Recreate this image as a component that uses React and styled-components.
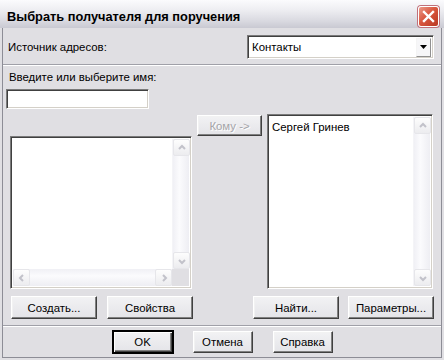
import React from 'react';
import styled, { createGlobalStyle, css } from 'styled-components';

const Global = createGlobalStyle`
  html, body { margin: 0; padding: 0; background: #e0dfe3; }
  body {
    font-family: "Liberation Sans", Arial, sans-serif;
    font-size: 11.4px;
    color: #000;
  }
`;

// window frame
const Window = styled.div`
  width: 444px;
  height: 360px;
  box-sizing: border-box;
  display: flex;
  flex-direction: column;
  background: #e0dfe3;
`;

const TitleBar = styled.div`
  flex: none;
  height: 28px;
  box-sizing: border-box;
  display: flex;
  align-items: center;
  justify-content: space-between;
  padding: 4px 5px 0 7px;
  background: linear-gradient(#fbfbfd 0%, #eeeef2 35%, #d9d9e0 75%, #c9c9d2 100%);
`;

const Title = styled.div`
  font-weight: 700;
  font-size: 12.8px;
`;

const CloseButton = styled.div`
  width: 21px;
  height: 21px;
  box-sizing: border-box;
  border: 1px solid #fff;
  border-radius: 3px;
  display: flex;
  align-items: center;
  justify-content: center;
  background: linear-gradient(135deg, #eb9b8c 0%, #d9573f 45%, #b93822 100%);
  box-shadow: 0 0 0 1px #c0707a;
`;

const Frame = styled.div`
  flex: 1;
  display: flex;
  flex-direction: column;
  margin: 0 2px 2px;
  border: 1px solid #8d8d96;
  border-top: none;
`;

// rows
const TopRow = styled.div`
  display: flex;
  align-items: center;
  justify-content: space-between;
  margin: 7px 7px 0 5px;
`;

const Separator = styled.div`
  height: 0;
  border-top: 1px solid #a0a0a8;
  border-bottom: 1px solid #fff;
  margin-top: ${(p) => p.$top}px;
`;

const FieldLabel = styled.div`
  line-height: 14px;
  margin: ${(p) => p.$margin};
`;

const sunken = css`
  box-sizing: border-box;
  background: #fff;
  border: 1px solid;
  border-color: #7a7a7a #fff #fff #7a7a7a;
  box-shadow: inset 1px 1px #404040, inset -1px -1px #d4d0c8;
`;

const Combo = styled.div`
  ${sunken}
  width: 187px;
  height: 24px;
  display: flex;
  align-items: center;
  justify-content: space-between;
  padding: 0 2px 0 4px;
`;

const ComboArrow = styled.div`
  width: 15px;
  height: 19px;
  box-sizing: border-box;
  border: 1px solid;
  border-color: #f4f4f4 #909090 #909090 #f4f4f4;
  background: #f6f6f8;
  display: flex;
  align-items: center;
  justify-content: center;
`;

const TextInput = styled.div`
  ${sunken}
  width: 143px;
  height: 20px;
  margin: 5px 0 0 3px;
`;

const Main = styled.div`
  display: grid;
  grid-template-columns: 182px 65px 166px;
  column-gap: 5px;
  align-items: start;
  margin: 5px 0 0 7px;
`;

const ListBox = styled.div`
  ${sunken}
  height: ${(p) => p.$height}px;
  margin-top: ${(p) => p.$top}px;
  display: grid;
  grid-template-columns: 1fr 17px;
  grid-template-rows: ${(p) => (p.$hscroll ? '1fr 17px' : '1fr')};
  padding: 2px;
`;

const ListContent = styled.div`
  padding: 3px 2px;
  line-height: 14px;
`;

const VScroll = styled.div`
  display: flex;
  flex-direction: column;
  background: linear-gradient(90deg, #f0f0f5, #fbfbfd 40%, #eeeef3);
  border-left: 1px solid #f4f4f7;
`;

const HScroll = styled.div`
  display: flex;
  background: linear-gradient(#f0f0f5, #fbfbfd 40%, #eeeef3);
`;

const Track = styled.div`
  flex: 1;
`;

const Corner = styled.div`
  background: #e0dfe3;
`;

const ScrollButton = styled.div`
  width: 17px;
  height: 17px;
  flex: none;
  box-sizing: border-box;
  border: 1px solid #e6e6ea;
  border-radius: 2px;
  background: linear-gradient(#fdfdfd, #ececef);
  display: flex;
  align-items: center;
  justify-content: center;
`;

const Button = styled.div`
  box-sizing: border-box;
  width: ${(p) => p.$width}px;
  height: ${(p) => p.$height}px;
  margin-top: ${(p) => p.$top || 0}px;
  display: flex;
  align-items: center;
  justify-content: center;
  border: 1px solid;
  border-color: #fff #404040 #404040 #fff;
  box-shadow: inset -1px -1px #808080, inset 1px 1px #f2f2f2;
  background: linear-gradient(#f2f2f4, #e4e4e8);
  color: ${(p) => (p.$disabled ? '#a4a4a8' : '#000')};
  text-shadow: ${(p) => (p.$disabled ? '1px 1px #fff' : 'none')};
  ${(p) => p.$default && css`
    outline: 1px solid #000;
    border-color: #000;
    box-shadow: inset 1px 1px #fff, inset -1px -1px #404040, inset -2px -2px #808080;
  `}
`;

const ButtonRow = styled.div`
  display: flex;
  justify-content: space-between;
  margin: 7px 7px 0 8px;
`;

const ButtonGroup = styled.div`
  display: flex;
  gap: ${(p) => p.$gap}px;
`;

const Footer = styled.div`
  display: flex;
  justify-content: center;
  gap: 20px;
  margin-top: 4px;
  padding-left: 1px;
`;

const Chevron = ({ dir, color = '#c2c2ca' }) => {
  const paths = {
    up: 'M3 7 L6 4 L9 7',
    down: 'M3 5 L6 8 L9 5',
    left: 'M7 3 L4 6 L7 9',
    right: 'M5 3 L8 6 L5 9',
  };
  return (
    <svg width="12" height="12" viewBox="0 0 12 12">
      <path d={paths[dir]} fill="none" stroke={color} strokeWidth="2" />
    </svg>
  );
};

const App = () => (
  <Window>
    <Global />
    <TitleBar>
      <Title>Выбрать получателя для поручения</Title>
      <CloseButton>
        <svg width="13" height="13" viewBox="0 0 13 13">
          <path d="M2 2 L11 11 M11 2 L2 11" stroke="#fff" strokeWidth="2.4" strokeLinecap="square" />
        </svg>
      </CloseButton>
    </TitleBar>
    <Frame>
      <TopRow>
        <span>Источник адресов:</span>
        <Combo>
          <span>Контакты</span>
          <ComboArrow>
            <svg width="7" height="4" viewBox="0 0 7 4">
              <path d="M0 0 H7 L3.5 4 Z" fill="#000" />
            </svg>
          </ComboArrow>
        </Combo>
      </TopRow>
      <Separator $top={5} />
      <FieldLabel $margin="4px 0 0 6px">Введите или выберите имя:</FieldLabel>
      <TextInput />
      <Main>
        <ListBox $height={153} $top={22} $hscroll>
          <ListContent />
          <VScroll>
            <ScrollButton><Chevron dir="up" /></ScrollButton>
            <Track />
            <ScrollButton><Chevron dir="down" /></ScrollButton>
          </VScroll>
          <HScroll>
            <ScrollButton><Chevron dir="left" /></ScrollButton>
            <Track />
            <ScrollButton><Chevron dir="right" /></ScrollButton>
          </HScroll>
          <Corner />
        </ListBox>
        <Button $width={65} $height={21} $top={1} $disabled>Кому -&gt;</Button>
        <ListBox $height={175} $top={0}>
          <ListContent>Сергей Гринев</ListContent>
          <VScroll>
            <ScrollButton><Chevron dir="up" /></ScrollButton>
            <Track />
            <ScrollButton><Chevron dir="down" /></ScrollButton>
          </VScroll>
        </ListBox>
      </Main>
      <ButtonRow>
        <ButtonGroup $gap={10}>
          <Button $width={86} $height={23}>Создать...</Button>
          <Button $width={86} $height={23}>Свойства</Button>
        </ButtonGroup>
        <ButtonGroup $gap={9}>
          <Button $width={86} $height={23}>Найти...</Button>
          <Button $width={86} $height={23}>Параметры...</Button>
        </ButtonGroup>
      </ButtonRow>
      <Separator $top={6} />
      <Footer>
        <Button $width={60} $height={22} $default>OK</Button>
        <Button $width={60} $height={22}>Отмена</Button>
        <Button $width={60} $height={22}>Справка</Button>
      </Footer>
    </Frame>
  </Window>
);

export default App;
